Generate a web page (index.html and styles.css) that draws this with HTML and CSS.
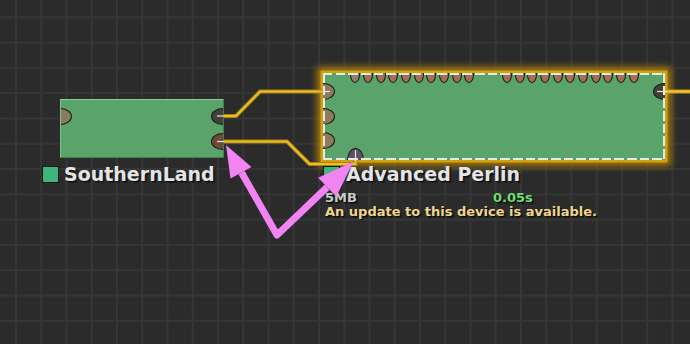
FILE: index.html
```html
<!DOCTYPE html>
<html>
<head>
<meta charset="utf-8">
<link rel="stylesheet" href="styles.css">
</head>
<body>
<div class="canvas">
  <div class="node node-src">
    <div class="col col-in">
      <span class="port port-tan"></span>
    </div>
    <div class="col col-out">
      <span class="port port-dark"></span>
      <span class="port port-brown"></span>
    </div>
  </div>
  <div class="label label-src">
    <span class="swatch"></span><span class="title">SouthernLand</span>
  </div>

  <div class="node node-dev">
    <div class="top-ports">
      <span class="tport tport-gray"></span>
      <span class="tport"></span><span class="tport"></span><span class="tport"></span><span class="tport"></span>
      <span class="tport"></span><span class="tport"></span><span class="tport"></span><span class="tport"></span><span class="tport"></span>
      <span class="tport tport-none"></span><span class="tport tport-none"></span>
      <span class="tport"></span><span class="tport"></span><span class="tport"></span><span class="tport"></span><span class="tport"></span>
      <span class="tport"></span><span class="tport"></span><span class="tport"></span><span class="tport"></span><span class="tport"></span><span class="tport"></span>
    </div>
    <div class="side-ports side-left">
      <span class="port port-tan"></span>
      <span class="port port-tan"></span>
      <span class="port port-tan"></span>
    </div>
    <div class="side-ports side-right">
      <span class="port port-dark"></span>
    </div>
    <span class="bport"></span>
  </div>
  <div class="label label-dev">
    <div class="label-row"><span class="swatch"></span><span class="title">Advanced Perlin</span></div>
    <div class="info-row"><span class="mem">5MB</span><span class="time">0.05s</span></div>
    <div class="notice">An update to this device is available.</div>
  </div>

  <svg class="overlay" width="690" height="344" viewBox="0 0 690 344">
    <g fill="none" stroke-linejoin="miter">
      <path d="M224 116 H236 L260 91.5 H323" stroke="#a8820a" stroke-width="4"/>
      <path d="M224 116 H236 L260 91.5 H323" stroke="#ecbe2e" stroke-width="2"/>
      <path d="M224 141.5 H287 L309.5 164 H355.5 V160" stroke="#a8820a" stroke-width="4"/>
      <path d="M224 141.5 H287 L309.5 164 H355.5 V160" stroke="#ecbe2e" stroke-width="2"/>
      <path d="M665 91.5 H690" stroke="#c99a08" stroke-width="4"/>
      <path d="M665 91.5 H690" stroke="#f2c53c" stroke-width="2"/>
      <g stroke="#e8e8e0" stroke-width="1.2">
        <path d="M217 116 H224"/>
        <path d="M217 141.5 H224"/>
        <path d="M323 91.5 H330"/>
        <path d="M657 91.5 H667"/>
        <path d="M355.5 150 V161"/>
      </g>
    </g>
    <g fill="#f283f2">
      <polyline points="241.5,172.5 277,235 327.2,187.1" fill="none" stroke="#f283f2" stroke-width="7" stroke-linejoin="round"/>
      <polygon points="226,145 251.5,167 230.5,178.5"/>
      <polygon points="353.5,161.5 336.3,196.4 318.1,177.8"/>
    </g>
  </svg>
</div>
</body>
</html>
```
FILE: styles.css
```css
html, body {
  margin: 0;
  padding: 0;
}
body {
  width: 690px;
  height: 344px;
  overflow: hidden;
  background: #2b2b2b;
}
.canvas {
  position: relative;
  width: 690px;
  height: 344px;
  background-color: #2b2b2b;
  background-image:
    linear-gradient(90deg, #363636 0 2px, transparent 2px),
    linear-gradient(180deg, #363636 0 2px, transparent 2px);
  background-size: 25.25px 25.3px;
  background-position: 15px 16.3px;
  font-family: "DejaVu Sans", Verdana, sans-serif;
  font-weight: bold;
}

/* nodes */
.node {
  position: absolute;
  box-sizing: border-box;
  background: #5aa36a;
}
.node-src {
  left: 60px;
  top: 99px;
  width: 164px;
  height: 59px;
  border-top: 1px solid #8fce9b;
  border-left: 1px solid #7dbf8a;
  border-right: 1px solid #3f7d4d;
  border-bottom: 1px solid #3f7d4d;
  display: flex;
  justify-content: space-between;
  overflow: hidden;
}
.col {
  display: flex;
  flex-direction: column;
  gap: 8.5px;
  padding-top: 7.5px;
}
.col-in { margin-left: -13px; }
.col-out { margin-right: -12px; }

.port {
  display: block;
  width: 24px;
  height: 17px;
  box-sizing: border-box;
  border-radius: 50%;
  border: 1.5px solid #1c1a16;
}
.port-tan { background: #8c7b5f; }
.port-dark { background: #41423a; }
.port-brown { background: #6c4a38; }

.node-dev {
  left: 323px;
  top: 73px;
  width: 342px;
  height: 87px;
  overflow: hidden;
  box-shadow: 0 0 0 2.5px #d2a00c, 0 0 7px 6px rgba(196, 144, 0, 0.78);
}
.node-dev::after {
  content: "";
  position: absolute;
  inset: 0;
  background:
    repeating-linear-gradient(90deg, #e2ebe8 0 9.5px, transparent 9.5px 12.67px) left top / 100% 2px no-repeat,
    repeating-linear-gradient(90deg, #e2ebe8 0 9.5px, transparent 9.5px 12.67px) left bottom / 100% 2px no-repeat,
    repeating-linear-gradient(180deg, #e2ebe8 0 9.5px, transparent 9.5px 12.67px) left top / 2px 100% no-repeat,
    repeating-linear-gradient(180deg, #e2ebe8 0 9.5px, transparent 9.5px 12.67px) right top / 2px 100% no-repeat;
}
.top-ports {
  position: absolute;
  left: 27.3px;
  top: -7px;
  display: flex;
  gap: 2.67px;
}
.tport {
  display: block;
  width: 10px;
  height: 17px;
  box-sizing: border-box;
  border-radius: 50%;
  border: 1.3px solid #1c1a16;
  background: #a26e58;
}
.tport-gray { background: #8a7e6e; }
.tport-none { visibility: hidden; }

.side-ports {
  position: absolute;
  top: 10px;
  display: flex;
  flex-direction: column;
  gap: 7.5px;
}
.side-left { left: -12px; }
.side-right { left: 330px; }
.bport {
  position: absolute;
  left: 24px;
  top: 75px;
  width: 17px;
  height: 24px;
  box-sizing: border-box;
  border-radius: 50%;
  border: 1.5px solid #1c1a16;
  background: #5b5264;
}

/* labels */
.label {
  position: absolute;
  color: #e4e4e4;
  text-shadow: 1px 1px 0 #0d0d0d, 2px 2px 0 rgba(0,0,0,0.35);
}
.label-src { left: 42px; top: 165px; display: flex; align-items: center; gap: 5px; }
.label-dev { left: 323px; top: 165px; }
.label-row { display: flex; align-items: center; gap: 6px; }
.swatch {
  display: block;
  width: 17px;
  height: 17px;
  box-sizing: border-box;
  background: #3eb67b;
  border: 1px solid #151515;
}
.title {
  font-size: 19px;
  line-height: 19px;
}
.info-row {
  display: flex;
  margin-top: 6.5px;
  padding-left: 2px;
  font-size: 13px;
  line-height: 14px;
}
.mem { width: 168px; color: #cacaca; }
.time { color: #6ee06c; }
.notice {
  padding-left: 2px;
  font-size: 13px;
  line-height: 14px;
  color: #f0d68a;
}

.overlay {
  position: absolute;
  left: 0;
  top: 0;
}
```
